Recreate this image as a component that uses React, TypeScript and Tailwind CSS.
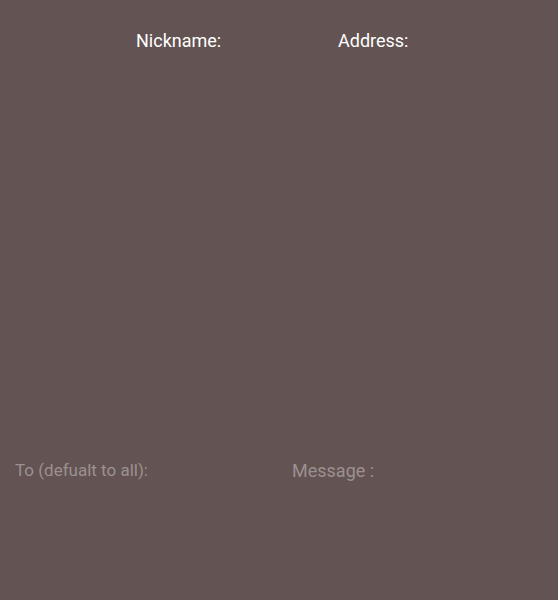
import React from "react";

export default function App() {
  return (
    <div className="w-[558px] h-[600px] bg-[#635352] flex flex-col" style={{ fontFamily: "Roboto, 'Liberation Sans', sans-serif" }}>
      <div className="flex pt-[30px] pl-[136px] text-white text-[18px] leading-[22px]">
        <div className="w-[202px]">Nickname:</div>
        <div>Address:</div>
      </div>
      <div className="flex-1" />
      <div className="flex h-[142px] leading-[20px]">
        <input
          className="w-[279px] h-full pl-[15px] pb-[118px] bg-transparent outline-none text-[17px] text-white placeholder:text-[#9c9190]"
          placeholder="To (defualt to all):"
        />
        <input
          className="w-[279px] h-full pl-[13px] pb-[118px] bg-transparent outline-none text-[18px] text-white placeholder:text-[#9c9190]"
          placeholder="Message :"
        />
      </div>
    </div>
  );
}
